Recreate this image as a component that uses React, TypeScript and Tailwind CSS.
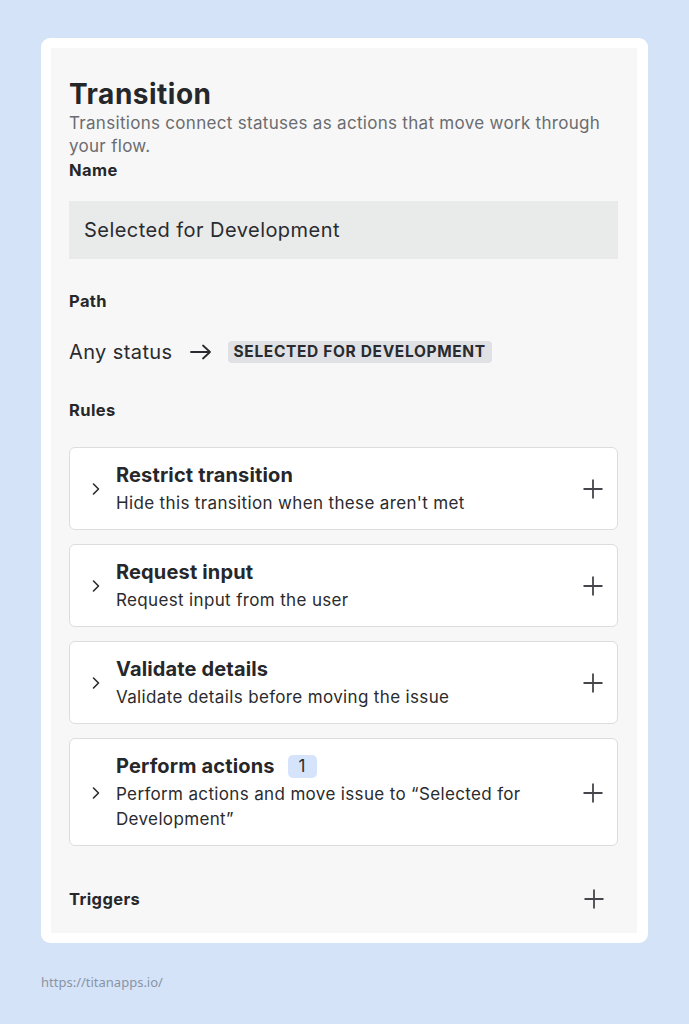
import React from "react";

const rules = [
  { title: "Restrict transition", desc: "Hide this transition when these aren't met" },
  { title: "Request input", desc: "Request input from the user" },
  { title: "Validate details", desc: "Validate details before moving the issue" },
  {
    title: "Perform actions",
    desc: "Perform actions and move issue to \u201cSelected for Development\u201d",
    count: 1,
  },
];

const Chevron = () => (
  <svg width="14" height="14" viewBox="0 0 14 14" fill="none" className="shrink-0">
    <path d="M4.5 2 L9.5 7 L4.5 12" stroke="#2a2b2e" strokeWidth="1.6" strokeLinecap="round" strokeLinejoin="round" />
  </svg>
);

const Plus = () => (
  <svg width="22" height="22" viewBox="0 0 22 22" fill="none" className="shrink-0">
    <path d="M11 1.5 V20.5 M1.5 11 H20.5" stroke="#44464b" strokeWidth="1.8" />
  </svg>
);

const App = () => {
  return (
    <div className="min-h-[1024px] w-full bg-[#d4e3f8] px-[41px] pt-[38px] font-['Inter',sans-serif]">
      {/* Card */}
      <div className="rounded-[9px] bg-white py-[10px] pl-[10px] pr-[11px]">
        <div className="bg-[#f7f7f7] pl-[18px] pr-[19px] pt-[29px] pb-[22px]">
          {/* Header */}
          <h1 className="text-[28px] font-bold leading-[34px] text-[#26272a] tracking-[0.5px]">Transition</h1>
          <p className="mt-[1px] text-[17px] leading-[23px] tracking-[0.3px] text-[#6a6c70]">
            Transitions connect statuses as actions that move work through your flow.
          </p>
          <div className="text-[16.5px] font-bold leading-[24px] tracking-[0.4px] text-[#26272a]">Name</div>
          <div className="mt-[19px] flex h-[58px] items-center bg-[#e9eaea] px-[15px] text-[20px] tracking-[0.45px] text-[#2a2b2e]">
            Selected for Development
          </div>

          {/* Path */}
          <div className="mt-[30px] text-[16.5px] font-bold leading-[24px] tracking-[0.4px] text-[#26272a]">Path</div>
          <div className="mt-[24px] flex items-center text-[20px] tracking-[0.4px] text-[#2a2b2e]">
            <span>Any status</span>
            <svg width="22" height="16" viewBox="0 0 22 16" fill="none" className="ml-[17px] mr-[16px]">
              <path d="M1 8 H20 M13 1.5 L20 8 L13 14.5" stroke="#2a2b2e" strokeWidth="1.8" strokeLinecap="round" strokeLinejoin="round" />
            </svg>
            <span className="rounded-[4px] bg-[#dfe1e5] px-[6px] py-[1px] text-[15.5px] font-bold leading-[20px] tracking-[0.65px] text-[#2a2b2e]">
              SELECTED FOR DEVELOPMENT
            </span>
          </div>

          {/* Rules */}
          <div className="mt-[31px] text-[16.5px] font-bold leading-[24px] tracking-[0.4px] text-[#26272a]">Rules</div>
          <div className="mt-[25px] flex flex-col gap-[14px]">
            {rules.map((r, i) => (
              <div
                key={i}
                className="flex items-center rounded-[6px] border border-[#dcdddf] bg-white pt-[14px] pb-[13px] pl-[19px] pr-[13px]"
              >
                <Chevron />
                <div className="ml-[13px] flex-1">
                  <div className="flex items-center">
                    <span className="text-[20px] font-bold leading-[27px] tracking-[0.15px] text-[#26272a]">{r.title}</span>
                    {r.count && (
                      <span className="ml-[13px] rounded-[5px] bg-[#d6e4fb] px-[11px] text-[17px] leading-[23px] text-[#2a2b2e]">
                        {r.count}
                      </span>
                    )}
                  </div>
                  <div className="mt-[2px] pr-[40px] text-[17px] leading-[25px] tracking-[0.35px] text-[#2a2b2e]">{r.desc}</div>
                </div>
                <Plus />
              </div>
            ))}
          </div>

          {/* Triggers */}
          <div className="mt-[41px] flex items-center justify-between pr-[13px]">
            <span className="text-[16.5px] font-bold leading-[24px] tracking-[0.4px] text-[#26272a]">Triggers</span>
            <Plus />
          </div>
        </div>
      </div>

      <div className="mt-[30px] text-[13px] text-[#8a93a6] font-['Noto_Sans',sans-serif]">https://titanapps.io/</div>
    </div>
  );
};

export default App;
